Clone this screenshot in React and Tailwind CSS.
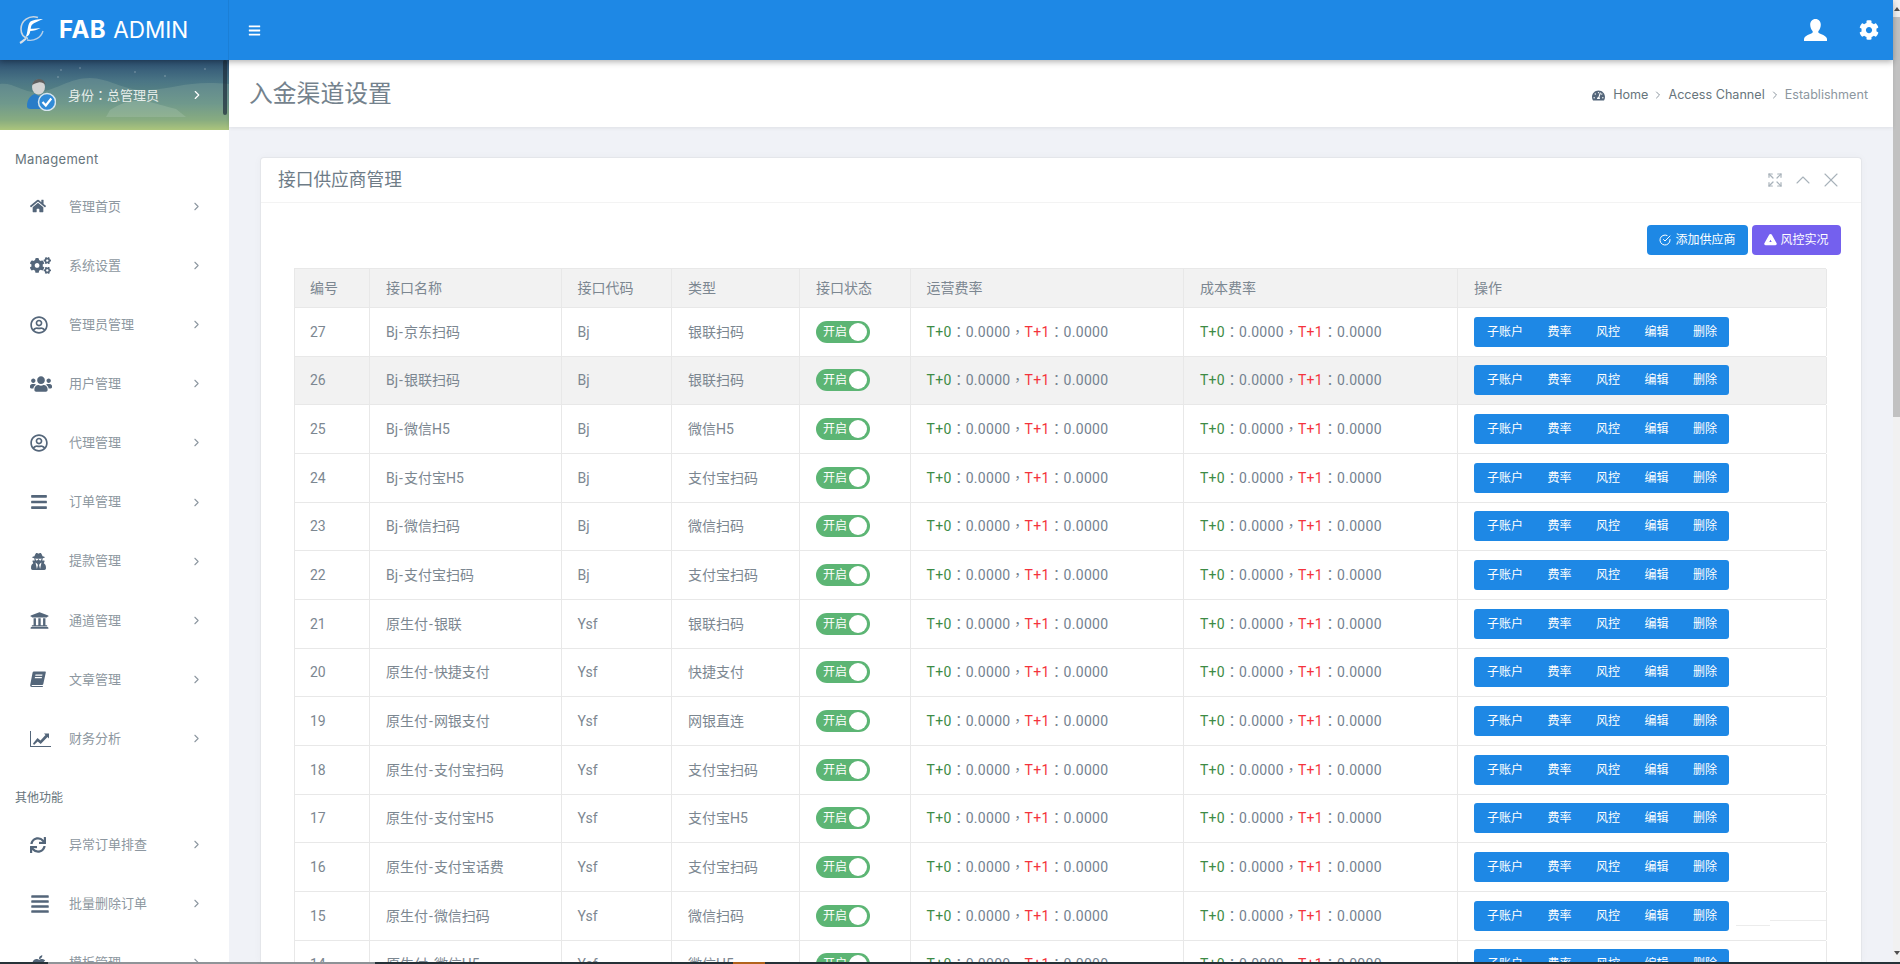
import React from "react";
import {
  FaHome,
  FaCogs,
  FaRegUserCircle,
  FaUsers,
  FaBars,
  FaUserSecret,
  FaUniversity,
  FaSync,
  FaAlignJustify,
  FaApple,
  FaCog,
  FaTachometerAlt,
} from "react-icons/fa";
import { FiChevronRight, FiCheckCircle } from "react-icons/fi";
import { Expand, ChevronUp, X } from "lucide-react";

const SlantBook = ({ size }) => (
  <svg width={size} height={size} viewBox="0 0 16 16" fill="#54667a">
    <path d="M4 .5h11c.6 0 .9.5.8 1L13.300 13c-.2.8-.8 1-1.500 1H2.500C1.900 14 1.500 14.500 1.700 15h11.100l.2.500c0 .3-.3.5-.7.5H1.800C.6 16 0 15 .2 14L2.500 2C2.700 1 3.200.5 4 .5zM5.500 3.500l-.3 1.300h7l.3-1.300zM5 6l-.3 1.300h7L12 6z" fillRule="evenodd" />
  </svg>
);

const LineChart = ({ size }) => (
  <svg width={size} height={size * 0.77} viewBox="0 0 21 16" fill="#54667a">
    <path d="M0 0h1v15h20v1H0z" />
    <path d="M3 12.500 7.500 7l3 2.500L15.500 4l-1.500-1.500h5v5L17.500 6l-6.800 6.800-3-2.500L4 14z" />
  </svg>
);

const menuOne = [
  [FaHome, "管理首页", 16],
  [FaCogs, "系统设置", 21],
  [FaRegUserCircle, "管理员管理", 18],
  [FaUsers, "用户管理", 22],
  [FaRegUserCircle, "代理管理", 18],
  [FaBars, "订单管理", 18],
  [FaUserSecret, "提款管理", 17],
  [FaUniversity, "通道管理", 19],
  [SlantBook, "文章管理", 16],
  [LineChart, "财务分析", 21],
];

const menuTwo = [
  [FaSync, "异常订单排查", 16],
  [FaAlignJustify, "批量删除订单", 20],
  [FaApple, "模板管理", 18],
];

const rows = [
  ["27", "Bj-京东扫码", "Bj", "银联扫码"],
  ["26", "Bj-银联扫码", "Bj", "银联扫码"],
  ["25", "Bj-微信H5", "Bj", "微信H5"],
  ["24", "Bj-支付宝H5", "Bj", "支付宝扫码"],
  ["23", "Bj-微信扫码", "Bj", "微信扫码"],
  ["22", "Bj-支付宝扫码", "Bj", "支付宝扫码"],
  ["21", "原生付-银联", "Ysf", "银联扫码"],
  ["20", "原生付-快捷支付", "Ysf", "快捷支付"],
  ["19", "原生付-网银支付", "Ysf", "网银直连"],
  ["18", "原生付-支付宝扫码", "Ysf", "支付宝扫码"],
  ["17", "原生付-支付宝H5", "Ysf", "支付宝H5"],
  ["16", "原生付-支付宝话费", "Ysf", "支付宝扫码"],
  ["15", "原生付-微信扫码", "Ysf", "微信扫码"],
  ["14", "原生付-微信H5", "Ysf", "微信H5"],
];

const headers = ["编号", "接口名称", "接口代码", "类型", "接口状态", "运营费率", "成本费率", "操作"];
const actions = ["子账户", "费率", "风控", "编辑", "删除"];

const gridCols =
  "grid grid-cols-[75px_191.6px_110.4px_128px_110.6px_273.4px_274px_369px]";
const cell = "flex items-center border-r border-[#e8e8e8] pl-[16px]";
const textCell = "flex items-center border-r border-[#e8e8e8] pl-[16px] pt-[1px]";

const Logo = () => (
  <svg width="28" height="30" viewBox="0 0 28 30" fill="none">
    <path d="M21 2.500C12-.5 4 6 4 14c0 5 3 8.500 7 9.500" stroke="#c9d6e2" strokeWidth="1.600" />
    <path d="M3 28c2-1 4-3 6-4.500" stroke="#d8e0e8" strokeWidth="2" />
    <path d="M10 25c7 1.500 14-2 16-9" stroke="#b4cfea" strokeWidth="1.400" />
    <path
      d="M26 4c-5 .3-11 .8-13 3-1.500 1.700-2 5-2.500 8-.3 2.500-.8 5-2 7 3-.5 4.300-3 4.800-6 3-.3 7-.8 10.200-3-3 .3-6 .7-9.800.8.200-1.500.5-3 1.300-4 2-2.300 6.500-3.500 11-5.800z"
      fill="#fff"
    />
  </svg>
);

const TopUser = () => (
  <svg width="23" height="22" viewBox="0 0 23 22" fill="#fff">
    <path d="M11.500 0c3.300 0 5.300 2.500 5.300 5.800 0 2.600-1 4.800-2.300 6.200-.4.500-.3 1.500.3 1.900 2.300 1.300 7 2.300 8 5.300.4 1.300.2 2.800.2 2.800H0s-.2-1.500.2-2.800c1-3 5.700-4 8-5.300.6-.4.700-1.400.3-1.900C7.200 10.600 6.200 8.400 6.200 5.800 6.200 2.500 8.200 0 11.500 0z" />
  </svg>
);

const Avatar = () => (
  <svg width="29" height="32" viewBox="0 0 29 32">
    <ellipse cx="11.500" cy="8" rx="6.500" ry="7.500" fill="#d4d4d4" />
    <path d="M5 6c1-4 4-6 7-6s6 2 6.500 6c-2-2-4-3-7-2.500C9 4 7 5 5 6z" fill="#5f5f5f" />
    <path d="M0 27c0-7 4-11 8-12l4 2 4-2c3 1 6 3 7 7l-5 8H4c-3 0-4-1-4-3z" fill="#2a7cc7" />
    <circle cx="20" cy="23" r="8.500" fill="#2f8bd8" stroke="#d8e6ef" strokeWidth="1.500" />
    <path d="M15.500 23l3.300 3.500 5.500-7" stroke="#fff" strokeWidth="2.200" fill="none" />
  </svg>
);

const DriveIcon = () => (
  <svg width="13" height="12" viewBox="0 0 13 12">
    <path
      fillRule="evenodd"
      fill="#fff"
      d="M5.300.6c.5-.8 1.900-.8 2.400 0l4.900 8.600c.5.900-.1 2-1.200 2H1.600c-1.100 0-1.700-1.100-1.200-2zM6.500 5.800 5.300 8h2.400z"
    />
  </svg>
);

const MenuItem = ({ Icon, label, size }) => (
  <div className="flex h-[59.15px] shrink-0 items-center">
    <span className="flex w-[69px] shrink-0 pl-[30px]">
      <Icon size={size} className="text-[#54667a]" />
    </span>
    <span className="text-[13px] text-[#8d97a0]">{label}</span>
    <FiChevronRight size={13} className="absolute left-[190px] text-[#8d97a0]" />
  </div>
);

const Section = ({ children }) => (
  <div className="flex h-[46.800px] shrink-0 items-center pl-[15px] pt-[12px] text-[12px] text-[#67757c]">
    {children}
  </div>
);

const Colon = () => <span className="font-['Noto_Sans_CJK_TC',sans-serif] tracking-normal">：</span>;

const Rate = () => (
  <span className="whitespace-nowrap text-[14px] tracking-[0.3px] text-[#748290]">
    <span className="text-[#3d8b45]">T+0</span>
    <Colon />
    0.0000
    <span className="font-['Noto_Sans_CJK_TC',sans-serif] tracking-normal">，</span>
    <span className="text-[#f4333c]">T+1</span>
    <Colon />
    0.0000
  </span>
);

// the hyphen in the interface names sits a little wider than Roboto's
const Name = ({ text }) => {
  const [left, right] = text.split("-");
  return (
    <span>
      {left}
      <span className="px-[1px]">-</span>
      {right}
    </span>
  );
};

const Row = ({ row, highlight }) => (
  <div
    className={`${gridCols} h-[48.670px] shrink-0 border-b border-[#e8e8e8] text-[14px] text-[#7c8791] ${
      highlight ? "bg-[#f2f2f2]" : ""
    }`}
  >
    <div className={`${textCell} !pl-[15px]`}>{row[0]}</div>
    <div className={textCell}>
      <Name text={row[1]} />
    </div>
    <div className={textCell}>{row[2]}</div>
    <div className={textCell}>{row[3]}</div>
    <div className={cell}>
      <div className="flex h-[22px] w-[54px] items-center justify-between rounded-full bg-[#5cb574] pl-[7px] pr-[3px]">
        <span className="text-[12px] leading-none text-white">开启</span>
        <span className="h-[18px] w-[18px] rounded-full bg-white" />
      </div>
    </div>
    <div className={cell}>
      <Rate />
    </div>
    <div className={cell}>
      <Rate />
    </div>
    <div className="flex items-center border-r border-[#e8e8e8] pl-[16px]">
      <div className="flex h-[30px] w-[255px] items-center gap-[24.500px] rounded-[3px] bg-[#1e88e5] pl-[13px] text-[12px] text-white">
        {actions.map((a) => (
          <span key={a}>{a}</span>
        ))}
      </div>
    </div>
  </div>
);

export default function App() {
  return (
    <div className="flex h-[964px] w-[1900px] flex-col overflow-hidden bg-[#f0f2f7] font-['Roboto','Noto_Sans_CJK_SC',sans-serif]">
      <div className="relative flex h-[962px] min-h-0">
        <div className="flex min-w-0 flex-1 flex-col">
          {/* top bar */}
          <header className="relative z-20 flex h-[60px] shrink-0 items-center bg-[#1e88e5] shadow-[0_2px_6px_rgba(0,0,0,0.3)]">
            <div className="flex h-full w-[229px] shrink-0 items-center border-r border-[#1b7fd6] pl-[17px]">
              <Logo />
              <span className="ml-[14px] flex items-baseline font-['Inter',sans-serif] text-white">
                <b className="text-[24px] font-bold tracking-[0.5px]">FAB</b>
                <span className="ml-[7px] text-[22.500px] font-normal">ADMIN</span>
              </span>
            </div>
            <FaBars size={13} className="ml-[19px] text-white" />
            <div className="ml-auto flex items-center gap-[32px] pr-[14px]">
              <TopUser />
              <FaCog size={20} className="text-white" />
            </div>
          </header>

          <div className="flex min-h-0 flex-1">
            {/* sidebar */}
            <aside className="relative flex w-[229px] shrink-0 flex-col overflow-hidden bg-white">
              <div className="relative flex h-[70px] shrink-0 items-center bg-[linear-gradient(180deg,#2c4f72_0%,#4a7585_30%,#628f82_62%,#86ab70_86%,#b9cf6a_100%)] pl-[27px]">
                <svg className="absolute inset-0" width="229" height="70" viewBox="0 0 229 70">
                  <path d="M0 24c14-2 24 10 40 8s30-14 50-14 34 14 60 12 40-10 79-6v46H0z" fill="#8fb0a4" opacity=".3" />
                  <path d="M110 50c12-8 24-10 34-9s22 6 32 8l10 8h-80z" fill="#a9c6b0" opacity=".35" />
                  <g fill="#fff" opacity=".45">
                    <circle cx="61" cy="10" r=".7" />
                    <circle cx="80" cy="8" r=".7" />
                    <circle cx="58" cy="17" r=".7" />
                    <circle cx="135" cy="12" r=".7" />
                    <circle cx="205" cy="9" r=".7" />
                    <circle cx="165" cy="16" r=".7" />
                  </g>
                </svg>
                <div className="absolute right-[2px] top-0 h-[55px] w-[4px] rounded-full bg-[#1d2c3a]/70" />
                <span className="relative">
                  <Avatar />
                </span>
                <span className="relative ml-[12px] text-[13px] text-[#e6edea]">
                  身份<Colon />总管理员
                </span>
                <FiChevronRight size={14} className="absolute left-[190px] text-white" />
              </div>

              <Section>
                <span className="font-['Inter',sans-serif] text-[13px] tracking-[0.3px]">Management</span>
              </Section>
              {menuOne.map(([Icon, label, size]) => (
                <MenuItem key={label} Icon={Icon} label={label} size={size} />
              ))}
              <Section>其他功能</Section>
              {menuTwo.map(([Icon, label, size]) => (
                <MenuItem key={label} Icon={Icon} label={label} size={size} />
              ))}
            </aside>

            {/* content */}
            <main className="flex min-w-0 flex-1 flex-col">
              <div className="relative z-10 flex h-[67px] shrink-0 items-center justify-between bg-white pl-[20px] pr-[25px] shadow-[0_1px_4px_rgba(0,0,0,0.08)]">
                <h1 className="pt-[2px] text-[23.800px] font-normal text-[#74828d]">入金渠道设置</h1>
                <div className="flex items-center pt-[4px] font-['Inter',sans-serif] text-[12.600px] text-[#67757c]">
                  <FaTachometerAlt size={13} className="mr-[8px] text-[#54667a]" />
                  <span>Home</span>
                  <FiChevronRight size={12} className="mx-[4px] text-[#8d97a0]" />
                  <span>Access Channel</span>
                  <FiChevronRight size={12} className="mx-[4px] text-[#8d97a0]" />
                  <span className="text-[#8d97a0]">Establishment</span>
                </div>
              </div>

              <div className="flex min-h-0 flex-1 flex-col pl-[31px] pr-[31px] pt-[30px]">
                <section className="flex min-h-0 flex-1 flex-col overflow-hidden rounded-t-[4px] border border-b-0 border-[#e4e6ea] bg-white shadow-[0_0_8px_rgba(0,0,0,0.03)]">
                  <div className="flex h-[45px] shrink-0 items-center justify-between border-b border-[#f3f3f3] pl-[17px] pr-[16px]">
                    <h2 className="text-[17.700px] font-normal text-[#6e7c87]">接口供应商管理</h2>
                    <div className="flex items-center text-[#a8b2ba]">
                      <span className="flex w-[28px] justify-center">
                        <Expand size={16} strokeWidth={1.8} />
                      </span>
                      <span className="flex w-[28px] justify-center">
                        <ChevronUp size={24} strokeWidth={1.1} />
                      </span>
                      <span className="flex w-[28px] justify-center">
                        <X size={24} strokeWidth={1.1} />
                      </span>
                    </div>
                  </div>

                  <div className="flex h-[65px] shrink-0 items-start justify-end gap-[4px] pr-[20px] pt-[22px]">
                    <button className="flex h-[30px] w-[101px] items-center justify-center gap-[4px] rounded-[4px] bg-[#1e88e5] text-[12px] text-white">
                      <FiCheckCircle size={12} />
                      添加供应商
                    </button>
                    <button className="flex h-[30px] w-[89px] items-center justify-center gap-[3px] rounded-[4px] bg-[#7460ee] text-[12px] text-white">
                      <DriveIcon />
                      风控实况
                    </button>
                  </div>

                  <div className="ml-[33px] flex w-[1532px] flex-1 flex-col border-l border-t border-[#e8e8e8]">
                    <div className={`${gridCols} h-[39px] shrink-0 border-b border-[#e8e8e8] bg-[#f2f2f2] text-[14px] text-[#7c8791]`}>
                      {headers.map((h, i) => (
                        <div key={h} className={i === 0 ? `${cell} !pl-[15px]` : cell}>
                          {h}
                        </div>
                      ))}
                    </div>
                    {rows.map((r, i) => (
                      <Row key={r[0]} row={r} highlight={i === 1} />
                    ))}
                  </div>
                </section>
              </div>
            </main>
          </div>
        </div>

        {/* browser scrollbar */}
        <div className="flex w-[7px] shrink-0 flex-col bg-[#f1f1f1]">
          <div className="flex h-[17px] shrink-0 justify-center pt-[7px]">
            <div className="h-0 w-0 border-x-[3px] border-b-[4px] border-x-transparent border-b-[#505050]" />
          </div>
          <div className="h-[400px] shrink-0 bg-[#c1c1c1]" />
          <div className="mt-auto flex h-[11px] justify-center">
            <div className="h-0 w-0 border-x-[3px] border-t-[4px] border-x-transparent border-t-[#505050]" />
          </div>
        </div>

        {/* stray lines left in the page */}
        <div className="absolute left-[1770px] top-[920px] h-px w-[56px] bg-[#ececec]" />
        <div className="absolute left-[1736px] top-[925px] h-px w-[34px] bg-[#ececec]" />
      </div>

      {/* sliver of the desktop task bar */}
      <div className="flex h-[2px] shrink-0 bg-[#263238]">
        <div className="w-[48px]" />
        <div className="w-[327px] bg-[#8f9498]" />
        <div className="w-[358px]" />
        <div className="w-[32px] bg-[#b5651d]" />
      </div>
    </div>
  );
}
